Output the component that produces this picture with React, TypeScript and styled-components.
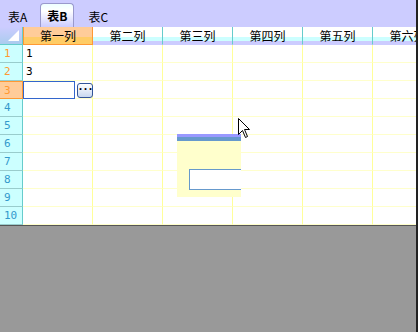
import React from 'react';
import styled, { createGlobalStyle } from 'styled-components';

const GlobalStyle = createGlobalStyle`
  html, body {
    margin: 0;
    padding: 0;
    background: #999999;
  }
  * {
    box-sizing: border-box;
  }
`;

const columns = ['第一列', '第二列', '第三列', '第四列', '第五列', '第六列'];
const rows = [1, 2, 3, 4, 5, 6, 7, 8, 9, 10];
const values: Record<number, string> = { 1: '1', 2: '3' };
const filledRows = [1, 2];
const activeRow = 3;

const Page = styled.div`
  position: relative;
  width: 418px;
  height: 332px;
  background: #999999;
  border-right: 2px solid #222222;
  font-family: 'Liberation Sans', 'Noto Sans CJK SC', sans-serif;
  font-size: 12px;
  color: #000;
  overflow: hidden;
`;

const TabBar = styled.div`
  display: flex;
  align-items: flex-end;
  height: 27px;
  padding-left: 3px;
  background: #ccccff;
`;

const Tab = styled.div<{ $active?: boolean }>`
  display: flex;
  align-items: center;
  justify-content: center;
  height: ${(p) => (p.$active ? '24px' : '22px')};
  padding: 0 ${(p) => (p.$active ? '6px' : '4px')};
  margin-right: ${(p) => (p.$active ? '9px' : '8px')};
  font-family: 'Noto Sans CJK SC', sans-serif;
  font-size: 12px;
  font-weight: ${(p) => (p.$active ? 700 : 400)};
  border: ${(p) => (p.$active ? '1px solid #9999cc' : '1px solid transparent')};
  border-bottom: none;
  border-radius: 4px 4px 0 0;
  background: ${(p) =>
    p.$active ? 'linear-gradient(#eeffff 0, #ffffff 30%, #ccccff 100%)' : 'transparent'};
`;

const Sheet = styled.div`
  height: 199px;
  background: #ffffff;
  border-bottom: 1px solid #555555;
  overflow: hidden;
`;

const Grid = styled.div`
  display: grid;
  grid-template-columns: 23px repeat(6, 70px);
  grid-auto-rows: 18px;
  width: max-content;
`;

const Corner = styled.div`
  position: relative;
  background: linear-gradient(#ccccff, #aaccee);
  border-right: 1px solid #66cccc;
  border-bottom: 1px solid #66cccc;
`;

const CornerMark = styled.div`
  position: absolute;
  right: 3px;
  bottom: 3px;
  width: 0;
  height: 0;
  border-left: 11px solid transparent;
  border-bottom: 11px solid #ffffff;
`;

const ColHead = styled.div<{ $active?: boolean }>`
  display: flex;
  align-items: center;
  justify-content: center;
  line-height: 16px;
  font-family: 'Noto Sans CJK SC', sans-serif;
  font-size: 12px;
  overflow: hidden;
  white-space: nowrap;
  background: ${(p) =>
    p.$active
      ? 'linear-gradient(#ffcc99 0, #ffcc99 60%, #ffcc66 60%)'
      : 'linear-gradient(#ffffff 0, #ffffff 58%, #ccffff 58%, #ccffff 84%, #ccccff 84%)'};
  border-right: 1px solid ${(p) => (p.$active ? '#ff9933' : '#66cccc')};
  border-left: ${(p) => (p.$active ? '1px solid #ff9933' : 'none')};
  border-bottom: 1px solid ${(p) => (p.$active ? '#ff9933' : '#ccccff')};
`;

const RowHead = styled.div<{ $active?: boolean; $filled?: boolean }>`
  display: flex;
  align-items: center;
  padding-left: 4px;
  font-family: 'DejaVu Sans Mono', monospace;
  font-size: 11px;
  color: ${(p) => (p.$active || p.$filled ? '#ff9933' : '#3399cc')};
  background: ${(p) => (p.$active ? '#ffcc99' : '#ccffff')};
  border-right: 1px solid ${(p) => (p.$active ? '#ff9933' : '#66cccc')};
  border-bottom: 1px solid ${(p) => (p.$active ? '#ff9933' : '#99cccc')};
  border-top: ${(p) => (p.$active ? '1px solid #ff9933' : 'none')};
`;

const Cell = styled.div`
  position: relative;
  display: flex;
  align-items: center;
  padding-left: 3px;
  font-family: 'DejaVu Sans Mono', monospace;
  font-size: 11px;
  border-right: 1px solid #ffff99;
  border-bottom: 1px solid #ffffcc;
`;

const Editor = styled.div`
  position: absolute;
  left: 0;
  top: 0;
  display: flex;
  align-items: center;
  gap: 2px;
  z-index: 2;
`;

const EditorBox = styled.div`
  width: 52px;
  height: 18px;
  background: #ffffff;
  border: 1px solid #3366cc;
`;

const DotsButton = styled.div`
  display: flex;
  align-items: center;
  justify-content: center;
  width: 16px;
  height: 15px;
  border: 1px solid #335599;
  border-radius: 3px;
  background: linear-gradient(#ffffff, #c8d8f0);
  font-size: 10px;
  font-weight: 700;
  line-height: 6px;
  letter-spacing: -1px;
  color: #000;
`;

const Popup = styled.div`
  position: absolute;
  left: 177px;
  top: 134px;
  width: 64px;
  height: 63px;
  background: #ffffcc;
  border-top: 3px solid #9999ff;
  overflow: hidden;
`;

const PopupBand = styled.div`
  height: 4px;
  background: #6699cc;
`;

const PopupField = styled.div`
  margin: 28px 0 0 12px;
  width: 60px;
  height: 21px;
  background: #ffffff;
  border: 1px solid #6699cc;
`;

const Pointer = styled.svg`
  position: absolute;
  left: 238px;
  top: 118px;
`;

export default function App() {
  return (
    <Page>
      <GlobalStyle />
      <TabBar>
        <Tab>表A</Tab>
        <Tab $active>表B</Tab>
        <Tab>表C</Tab>
      </TabBar>
      <Sheet>
        <Grid>
          <Corner>
            <CornerMark />
          </Corner>
          {columns.map((c, i) => (
            <ColHead key={c} $active={i === 0}>
              {c}
            </ColHead>
          ))}
          {rows.map((r) => (
            <React.Fragment key={r}>
              <RowHead $active={r === activeRow} $filled={filledRows.includes(r)}>
                {r}
              </RowHead>
              {columns.map((c, i) => (
                <Cell key={c}>
                  {i === 0 && values[r]}
                  {i === 0 && r === activeRow && (
                    <Editor>
                      <EditorBox />
                      <DotsButton>···</DotsButton>
                    </Editor>
                  )}
                </Cell>
              ))}
            </React.Fragment>
          ))}
        </Grid>
      </Sheet>
      <Popup>
        <PopupBand />
        <PopupField />
      </Popup>
      <Pointer width="13" height="21" viewBox="0 0 13 21">
        <path
          d="M0.5 0.5 L0.5 16.5 L4.5 12.5 L7.5 19.5 L9.5 18.5 L6.5 11.5 L11.5 11.5 Z"
          fill="#ffffff"
          stroke="#000000"
          strokeWidth="1"
        />
      </Pointer>
    </Page>
  );
}
